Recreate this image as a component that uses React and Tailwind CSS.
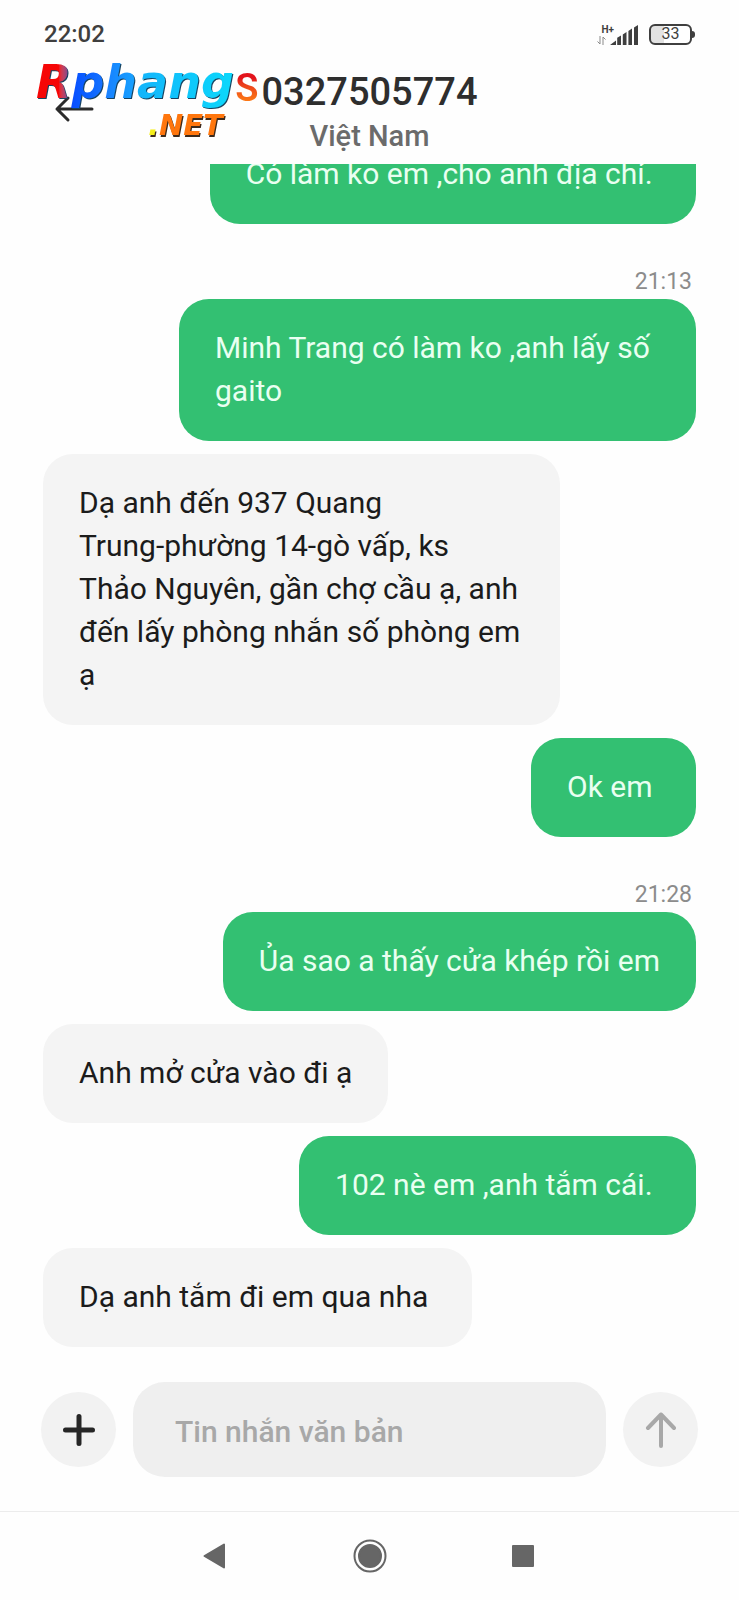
import { useState } from "react";

const messages = [
  { id: 1, from: "me", text: "Có làm ko em ,cho anh địa chỉ.\u00a0" },
  { id: 2, from: "me", time: "21:13", text: "Minh Trang có làm ko ,anh lấy số gaito" },
  {
    id: 3,
    from: "them",
    text: "Dạ anh đến 937 Quang\nTrung-phường 14-gò vấp, ks\nThảo Nguyên, gần chợ cầu ạ, anh\nđến lấy phòng nhắn số phòng em ạ",
  },
  { id: 4, from: "me", text: "Ok em\u00a0" },
  { id: 5, from: "me", time: "21:28", text: "Ủa sao a thấy cửa khép rồi em" },
  { id: 6, from: "them", text: "Anh mở cửa vào đi ạ" },
  { id: 7, from: "me", text: "102 nè em ,anh tắm cái.\u00a0" },
  { id: 8, from: "them", text: "Dạ anh tắm đi em qua nha\u00a0" },
];

function StatusBar() {
  return (
    <div className="flex h-14 items-center justify-between pt-3 pr-11 pl-11 text-[#3f3f3f]">
      <span className="text-2xl font-medium">22:02</span>
      <div className="flex items-center gap-[11px]">
        <div className="flex items-end">
          <div className="flex flex-col items-end">
            <span className="text-[10px] leading-3 font-bold">H+</span>
            <svg className="mr-2" width="9" height="9" viewBox="0 0 9 9" fill="none" stroke="#8a8a8a">
              <path d="M3 0v8L0.5 5.5M6 9V1l2.500 2.500" />
            </svg>
          </div>
          <svg className="-ml-1" width="28" height="20" viewBox="0 0 28 20" fill="currentColor">
            <path d="M0 20L6 15.500V20zM7.200 20V12.800L11 10.500V20zM12.800 20V9.500L16.500 7V20zM18.400 20V6L22 3.500V20zM24 20V2.500L28 0V20z" />
          </svg>
        </div>
        <div className="flex items-center">
          <span className="flex h-[21px] w-[43px] items-center justify-center rounded-md border-2 border-current bg-linear-to-r from-[#e2e2e2] from-33% to-white to-33% text-base leading-4">
            33
          </span>
          <span className="h-[7px] w-[3px] rounded-r-sm bg-current" />
        </div>
      </div>
    </div>
  );
}

function Logo() {
  return (
    <div className="pointer-events-none absolute -top-px left-9 font-['DejaVu_Sans',sans-serif] font-bold italic">
      <div className="flex items-baseline text-[46px] leading-[54px] drop-shadow-[1px_1px_0_#17425f]">
        <span className="bg-linear-to-r from-[#f60606] from-65% to-[#5b3fa8] bg-clip-text text-transparent">R</span>
        <span className="bg-linear-to-r from-[#0a4cff] to-[#1673ff] bg-clip-text text-transparent">p</span>
        <span className="bg-linear-to-r from-[#1a7dff] to-[#18a4ff] bg-clip-text text-transparent">h</span>
        <span className="bg-linear-to-r from-[#14b4fb] to-[#0cd8fb] bg-clip-text text-transparent">ang</span>
      </div>
      <div className="pl-28 text-[29px] leading-8 text-[#ff760d] drop-shadow-[1px_2px_0_#3d2a1c]">
        <span className="text-[#f5ee1b]">.</span>NET
      </div>
    </div>
  );
}

function Header() {
  return (
    <header className="relative flex h-[108px] flex-col items-center">
      <button type="button" aria-label="Back" className="absolute top-9 left-[54px] text-[#2b2b2b]">
        <svg width="40" height="34" viewBox="0 0 40 34" fill="none" stroke="currentColor" strokeWidth="3" strokeLinecap="round" strokeLinejoin="round">
          <path d="M38 17H3M14 6L3 17L14 28" />
        </svg>
      </button>
      <h1 className="relative mt-3 text-[38px] leading-[48px] font-medium text-[#2e2e2e]">
        <span className="absolute right-full -mt-1 bg-linear-to-b from-[#e3141c] from-30% to-[#ff8412] to-85% bg-clip-text pr-[3px] font-semibold text-transparent">
          S
        </span>
        0327505774
      </h1>
      <p className="mt-1 text-[29px] leading-8 font-medium text-[#6b6b6b]">Việt Nam</p>
      <Logo />
    </header>
  );
}

function Message({ message }) {
  const mine = message.from === "me";

  return (
    <li className={`flex flex-col ${mine ? "items-end" : "items-start"}`}>
      {message.time && (
        <time className="mt-[30px] mr-1 mb-0.5 text-[23px] leading-[30px] text-[#8c8c8c]">{message.time}</time>
      )}
      <p
        className={`max-w-[517px] rounded-[30px] px-9 pt-[27px] pb-[29px] text-3xl leading-[43px] whitespace-pre-line ${
          mine ? "bg-[#33c072] text-[#e9fff1]" : "bg-[#f4f4f4] text-[#1b1b1b]"
        }`}
      >
        {message.text}
      </p>
    </li>
  );
}

function Composer() {
  const [draft, setDraft] = useState("");

  return (
    <form
      onSubmit={(e) => e.preventDefault()}
      className="flex items-center gap-[17px] px-[41px] pt-[35px] pb-[34px]"
    >
      <button
        type="button"
        aria-label="Add attachment"
        className="flex size-[75px] shrink-0 items-center justify-center rounded-full bg-[#f2f2f2] text-[#262626]"
      >
        <svg width="32" height="32" viewBox="0 0 32 32" stroke="currentColor" strokeWidth="5" strokeLinecap="round">
          <path d="M16 2.500v27M2.500 16h27" />
        </svg>
      </button>
      <input
        type="text"
        aria-label="Tin nhắn văn bản"
        placeholder="Tin nhắn văn bản"
        value={draft}
        onChange={(e) => setDraft(e.target.value)}
        className="h-[95px] min-w-0 flex-1 rounded-[32px] bg-[#efefef] px-[42px] pt-1 text-3xl font-medium text-[#1b1b1b] outline-none placeholder:text-[#a8a8a8]"
      />
      <button
        type="submit"
        aria-label="Send"
        className="flex size-[75px] shrink-0 items-center justify-center rounded-full bg-[#f2f2f2] text-[#a8a8a8]"
      >
        <svg width="32" height="36" viewBox="0 0 32 36" fill="none" stroke="currentColor" strokeWidth="4" strokeLinecap="round" strokeLinejoin="round">
          <path d="M16 34V2.500M3 16L16 2.500L29 16" />
        </svg>
      </button>
    </form>
  );
}

function NavBar() {
  return (
    <nav className="flex h-[89px] items-center justify-center gap-[119px] border-t border-[#ececec] text-[#666]">
      <button type="button" aria-label="Back">
        <svg width="34" height="34" viewBox="0 0 34 34" fill="currentColor" stroke="currentColor" strokeWidth="2" strokeLinejoin="round">
          <path d="M4.500 17L24 5.500v23z" />
        </svg>
      </button>
      <button type="button" aria-label="Home">
        <svg width="34" height="34" viewBox="0 0 34 34" fill="none" stroke="currentColor" strokeWidth="2">
          <circle cx="17" cy="17" r="15.500" />
          <circle cx="17" cy="17" r="11" fill="currentColor" />
        </svg>
      </button>
      <button type="button" aria-label="Recent apps">
        <svg width="34" height="34" viewBox="0 0 34 34" fill="currentColor">
          <rect x="6" y="6" width="22" height="22" rx="1" />
        </svg>
      </button>
    </nav>
  );
}

export default function App() {
  return (
    <div className="min-h-screen bg-[#fefefe] font-[Roboto,sans-serif]">
      <StatusBar />
      <Header />
      <main className="overflow-hidden">
        {/* the list is scrolled, so the oldest bubble runs under the header */}
        <ul className="-mt-[39px] flex flex-col gap-[13px] px-[43px]">
          {messages.map((message) => (
            <Message key={message.id} message={message} />
          ))}
        </ul>
      </main>
      <Composer />
      <NavBar />
    </div>
  );
}
